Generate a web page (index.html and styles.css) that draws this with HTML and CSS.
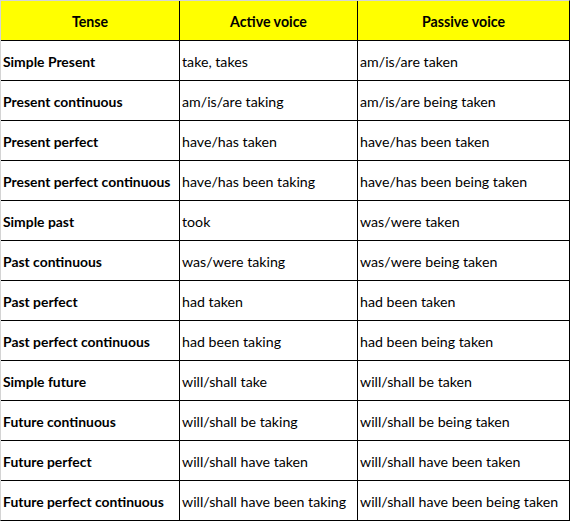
FILE: index.html
```html
<!DOCTYPE html>
<html>
<head>
<meta charset="utf-8">
<link rel="stylesheet" href="styles.css">
</head>
<body>
<div class="grid">
  <div class="cell head">Tense</div>
  <div class="cell head">Active voice</div>
  <div class="cell head">Passive voice</div>

  <div class="cell tense">Simple Present</div>
  <div class="cell">take, takes</div>
  <div class="cell">am/is/are taken</div>

  <div class="cell tense">Present continuous</div>
  <div class="cell">am/is/are taking</div>
  <div class="cell">am/is/are being taken</div>

  <div class="cell tense">Present perfect</div>
  <div class="cell">have/has taken</div>
  <div class="cell">have/has been taken</div>

  <div class="cell tense">Present perfect continuous</div>
  <div class="cell">have/has been taking</div>
  <div class="cell">have/has been being taken</div>

  <div class="cell tense">Simple past</div>
  <div class="cell">took</div>
  <div class="cell">was/were taken</div>

  <div class="cell tense">Past continuous</div>
  <div class="cell">was/were taking</div>
  <div class="cell">was/were being taken</div>

  <div class="cell tense">Past perfect</div>
  <div class="cell">had taken</div>
  <div class="cell">had been taken</div>

  <div class="cell tense">Past perfect continuous</div>
  <div class="cell">had been taking</div>
  <div class="cell">had been being taken</div>

  <div class="cell tense">Simple future</div>
  <div class="cell">will/shall take</div>
  <div class="cell">will/shall be taken</div>

  <div class="cell tense">Future continuous</div>
  <div class="cell">will/shall be taking</div>
  <div class="cell">will/shall be being taken</div>

  <div class="cell tense">Future perfect</div>
  <div class="cell">will/shall have taken</div>
  <div class="cell">will/shall have been taken</div>

  <div class="cell tense">Future perfect continuous</div>
  <div class="cell">will/shall have been taking</div>
  <div class="cell">will/shall have been being taken</div>
</div>
</body>
</html>
```

FILE: styles.css
```css
html, body {
  margin: 0;
  padding: 0;
  background: #ffffff;
}
.grid {
  display: grid;
  width: max-content;
  grid-template-columns: 178px 177px 211px;
  grid-auto-rows: 39px;
  gap: 1px;
  background: #000000;
  border-top: 1px solid #d4d4d4;
  border-left: 1px solid #d4d4d4;
  border-right: 1px solid #000000;
  border-bottom: 1px solid #000000;
  font-family: "Lato", "Liberation Sans", sans-serif;
  font-size: 14.2px;
  color: #000000;
}
.cell {
  background: #ffffff;
  display: flex;
  align-items: center;
  padding: 1px 0 0 2px;
  white-space: nowrap;
  overflow: hidden;
}
.head {
  background: #ffff00;
  font-weight: bold;
  justify-content: center;
  padding: 2px 0 0 0;
}
.tense {
  font-weight: bold;
  font-size: 13.9px;
}
```
